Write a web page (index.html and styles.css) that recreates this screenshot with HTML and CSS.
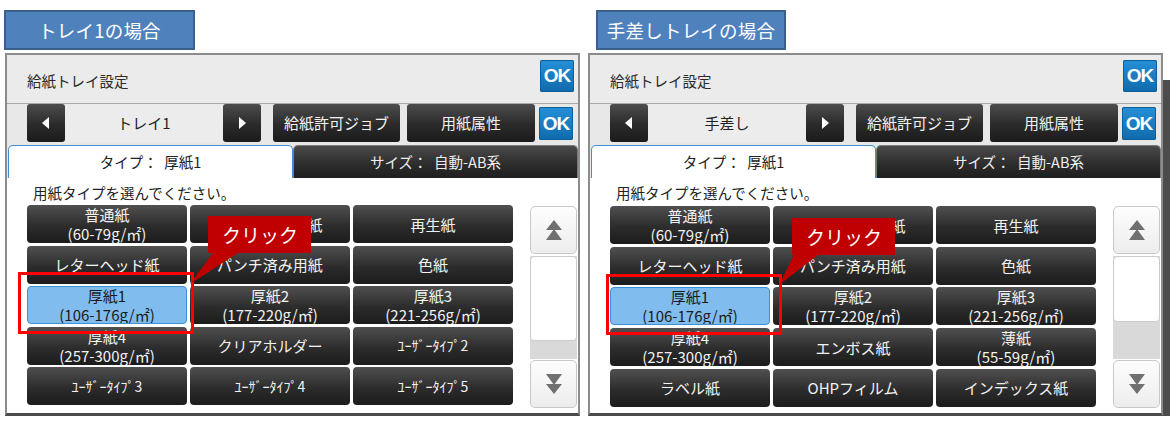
FILE: index.html
```html
<!DOCTYPE html>
<html lang="ja">
<head>
<meta charset="utf-8">
<title>給紙トレイ設定</title>
<link rel="stylesheet" href="styles.css">
</head>
<body>
<div class="page">

  <!-- トレイ1 -->
  <section class="col col-a">
    <div class="label">トレイ1の場合</div>
    <div class="frame">
      <div class="panel">
        <div class="head">
          <span class="title">給紙トレイ設定</span>
          <button class="ok">OK</button>
        </div>
        <div class="nav">
          <button class="arrow"><svg width="8" height="12" viewBox="0 0 8 12"><polygon points="7,0 7,12 0,6" fill="#fff"/></svg></button>
          <div class="tray">トレイ1</div>
          <button class="arrow"><svg width="8" height="12" viewBox="0 0 8 12"><polygon points="1,0 1,12 8,6" fill="#fff"/></svg></button>
          <button class="navbtn job">給紙許可ジョブ</button>
          <button class="navbtn attr">用紙属性</button>
          <button class="ok ok-nav">OK</button>
        </div>
        <div class="tabs">
          <div class="tab active">タイプ：&nbsp;&nbsp;厚紙1</div>
          <div class="tab">サイズ：&nbsp;&nbsp;自動-AB系</div>
        </div>
        <div class="body">
          <div class="hint">用紙タイプを選んでください。</div>
          <div class="content">
            <div class="grid">
              <div class="cell"><span>普通紙</span><span>(60-79g/㎡)</span></div>
              <div class="cell"><span>プレプリント紙</span></div>
              <div class="cell"><span>再生紙</span></div>
              <div class="cell"><span>レターヘッド紙</span></div>
              <div class="cell"><span>パンチ済み用紙</span></div>
              <div class="cell"><span>色紙</span></div>
              <div class="cell selected"><span>厚紙1</span><span>(106-176g/㎡)</span></div>
              <div class="cell"><span>厚紙2</span><span>(177-220g/㎡)</span></div>
              <div class="cell"><span>厚紙3</span><span>(221-256g/㎡)</span></div>
              <div class="cell"><span>厚紙4</span><span>(257-300g/㎡)</span></div>
              <div class="cell"><span>クリアホルダー</span></div>
              <div class="cell hw"><span>ﾕｰｻﾞｰﾀｲﾌﾟ2</span></div>
              <div class="cell hw"><span>ﾕｰｻﾞｰﾀｲﾌﾟ3</span></div>
              <div class="cell hw"><span>ﾕｰｻﾞｰﾀｲﾌﾟ4</span></div>
              <div class="cell hw"><span>ﾕｰｻﾞｰﾀｲﾌﾟ5</span></div>
            </div>
            <div class="scroll">
              <button class="sbtn"><svg width="16" height="20" viewBox="0 0 16 20"><polygon points="8,0 16,10 0,10" fill="#707070"/><polygon points="8,9 16,20 0,20" fill="#707070"/></svg></button>
              <div class="track track-a"><div class="thumb"></div></div>
              <button class="sbtn"><svg width="16" height="20" viewBox="0 0 16 20"><polygon points="0,0 16,0 8,11" fill="#707070"/><polygon points="0,10 16,10 8,20" fill="#707070"/></svg></button>
            </div>
          </div>
        </div>

        <div class="mark mark-a"></div>
        <svg class="pointer" width="575" height="363" viewBox="0 0 575 363"><polygon points="208,200 233,200 185,231" fill="#c00000"/></svg>
        <div class="callout callout-a">クリック</div>
      </div>
    </div>
  </section>

  <!-- 手差しトレイ -->
  <section class="col col-b">
    <div class="label label-b">手差しトレイの場合</div>
    <div class="frame">
      <div class="panel">
        <div class="head">
          <span class="title">給紙トレイ設定</span>
          <button class="ok">OK</button>
        </div>
        <div class="nav">
          <button class="arrow"><svg width="8" height="12" viewBox="0 0 8 12"><polygon points="7,0 7,12 0,6" fill="#fff"/></svg></button>
          <div class="tray">手差し</div>
          <button class="arrow"><svg width="8" height="12" viewBox="0 0 8 12"><polygon points="1,0 1,12 8,6" fill="#fff"/></svg></button>
          <button class="navbtn job">給紙許可ジョブ</button>
          <button class="navbtn attr">用紙属性</button>
          <button class="ok ok-nav">OK</button>
        </div>
        <div class="tabs">
          <div class="tab active">タイプ：&nbsp;&nbsp;厚紙1</div>
          <div class="tab">サイズ：&nbsp;&nbsp;自動-AB系</div>
        </div>
        <div class="body body-b">
          <div class="hint">用紙タイプを選んでください。</div>
          <div class="content">
            <div class="grid">
              <div class="cell"><span>普通紙</span><span>(60-79g/㎡)</span></div>
              <div class="cell"><span>プレプリント紙</span></div>
              <div class="cell"><span>再生紙</span></div>
              <div class="cell"><span>レターヘッド紙</span></div>
              <div class="cell"><span>パンチ済み用紙</span></div>
              <div class="cell"><span>色紙</span></div>
              <div class="cell selected"><span>厚紙1</span><span>(106-176g/㎡)</span></div>
              <div class="cell"><span>厚紙2</span><span>(177-220g/㎡)</span></div>
              <div class="cell"><span>厚紙3</span><span>(221-256g/㎡)</span></div>
              <div class="cell"><span>厚紙4</span><span>(257-300g/㎡)</span></div>
              <div class="cell"><span>エンボス紙</span></div>
              <div class="cell"><span>薄紙</span><span>(55-59g/㎡)</span></div>
              <div class="cell"><span>ラベル紙</span></div>
              <div class="cell"><span>OHPフィルム</span></div>
              <div class="cell"><span>インデックス紙</span></div>
            </div>
            <div class="scroll">
              <button class="sbtn"><svg width="16" height="20" viewBox="0 0 16 20"><polygon points="8,0 16,10 0,10" fill="#707070"/><polygon points="8,9 16,20 0,20" fill="#707070"/></svg></button>
              <div class="track track-b"><div class="thumb"></div></div>
              <button class="sbtn"><svg width="16" height="20" viewBox="0 0 16 20"><polygon points="0,0 16,0 8,11" fill="#707070"/><polygon points="0,10 16,10 8,20" fill="#707070"/></svg></button>
            </div>
          </div>
        </div>

        <div class="mark mark-b"></div>
        <svg class="pointer" width="575" height="363" viewBox="0 0 575 363"><polygon points="206,202 230,202 191,232" fill="#c00000"/></svg>
        <div class="callout callout-b">クリック</div>
      </div>
      <div class="edge"></div>
    </div>
  </section>

</div>
</body>
</html>
```

FILE: styles.css
```css
* {
  box-sizing: border-box;
}

html, body {
  margin: 0;
  padding: 0;
  background: #fff;
}

body {
  width: 1170px;
  height: 425px;
  overflow: hidden;
  font-family: "Noto Sans CJK JP", "Noto Sans", sans-serif;
  color: #222;
}

button {
  font-family: inherit;
  border: 0;
  padding: 0;
  margin: 0;
  cursor: pointer;
}

.page {
  display: flex;
  padding-top: 10px;
}

.col {
  display: flex;
  flex-direction: column;
}

.col-a {
  margin-left: 4px;
}

.col-b {
  margin-left: 8px;
}

/* blue caption boxes */
.label {
  width: 191px;
  height: 40px;
  background: #4f81bd;
  border: 2px solid #3b5f8d;
  color: #fff;
  font-size: 18.5px;
  line-height: 36px;
  text-align: center;
  letter-spacing: 0.2px;
}

.label-b {
  width: 190px;
  margin-left: 8px;
}

.frame {
  display: flex;
  margin-top: 3px;
}

.col-a .frame {
  margin-left: 1px;
}

/* device screen */
.panel {
  position: relative;
  width: 575px;
  height: 363px;
  border: 2px solid #8c8c8c;
  border-bottom: 3px solid #4b4b4b;
  background: #ebebeb;
  display: flex;
  flex-direction: column;
}

.edge {
  width: 7px;
  margin-top: 27px;
  height: 336px;
  background: #4c4c4c;
}

.head {
  height: 49px;
  flex: none;
  display: flex;
  justify-content: space-between;
  align-items: flex-start;
  padding: 5px 4px 0 20px;
  background: #ebebeb;
  border-bottom: 1px solid #a9a9a9;
}

.title {
  font-size: 14.5px;
  line-height: 20px;
  margin-top: 11px;
  color: #2a2a2a;
}

.ok {
  width: 34px;
  height: 32px;
  border-radius: 2px;
  background: linear-gradient(#2590d8, #106aab);
  color: #fff;
  font-family: "Liberation Sans", Arial, sans-serif;
  font-weight: bold;
  font-size: 19px;
  letter-spacing: -1px;
  line-height: 32px;
  text-align: center;
  box-shadow: inset 0 0 0 1px #0d5f9c;
}

.nav {
  height: 41px;
  flex: none;
  display: flex;
  align-items: flex-start;
  padding: 0 4px 0 20px;
  background: #e8e8e8;
}

.arrow {
  width: 38px;
  height: 38px;
  border-radius: 3px;
  background: linear-gradient(#4d4d4d, #2a2a2a 55%, #1b1b1b);
  display: flex;
  align-items: center;
  justify-content: center;
}

.tray {
  width: 158px;
  height: 38px;
  background: #ececec;
  font-size: 15px;
  line-height: 38px;
  text-align: center;
  color: #222;
}

.navbtn {
  height: 38px;
  border-radius: 3px;
  background: linear-gradient(#4d4d4d, #2a2a2a 55%, #1b1b1b);
  color: #f2f2f2;
  font-size: 15px;
  line-height: 38px;
  text-align: center;
}

.job {
  width: 127px;
  margin-left: 12px;
}

.attr {
  width: 128px;
  margin-left: 7px;
}

.ok-nav {
  margin-left: 4px;
  margin-top: 3px;
  height: 33px;
  line-height: 33px;
}

.tabs {
  height: 33px;
  flex: none;
  display: flex;
  background: #e8e8e8;
}

.tab {
  flex: 1;
  height: 33px;
  font-size: 14.5px;
  line-height: 31px;
  text-align: center;
  border-radius: 5px 5px 0 0;
  background: linear-gradient(#4a4a4a, #2b2b2b 60%, #1f1f1f);
  color: #eee;
  border: 1px solid #7a7a7a;
  border-bottom: 0;
}

.tab.active {
  flex: none;
  width: 285px;
  margin-left: 1px;
  background: #fff;
  color: #222;
  border: 1px solid #3f8ed8;
  border-bottom: 0;
}

.body {
  flex: 1;
  background: #fff;
  padding: 5px 1px 0 20px;
}

.hint {
  height: 20px;
  font-size: 14.5px;
  line-height: 20px;
  padding-left: 6px;
  margin-bottom: 2px;
  color: #222;
}

.content {
  display: flex;
  gap: 17px;
}

.grid {
  display: grid;
  grid-template-columns: repeat(3, 160px);
  grid-auto-rows: 38px;
  gap: 2.5px 3px;
}

.body-b .grid {
  margin-top: 1px;
  row-gap: 2.7px;
}

.cell {
  border-radius: 4px;
  background: linear-gradient(#505050, #2c2c2c 55%, #1c1c1c);
  color: #f2f2f2;
  font-size: 15px;
  line-height: 19px;
  display: flex;
  flex-direction: column;
  align-items: center;
  justify-content: center;
  overflow: hidden;
  white-space: nowrap;
}

.cell.hw {
  font-size: 14px;
}

.cell.selected {
  background: #80bdee;
  border: 1px solid #3d8fd8;
  color: #1b1b1b;
}

/* scroll bar */
.scroll {
  width: 47px;
  margin-top: 1px;
  display: flex;
  flex-direction: column;
}

.sbtn {
  width: 47px;
  height: 48px;
  border: 1px solid #c8c8c8;
  border-radius: 5px;
  background: linear-gradient(#fdfdfd, #ededed);
  display: flex;
  align-items: center;
  justify-content: center;
}

.track {
  height: 103px;
  margin: 2px 0 1px;
  background: #d9d9d9;
}

.thumb {
  background: #fff;
  border: 1px solid #cbcbcb;
  border-radius: 4px;
}

.track-a .thumb {
  height: 85px;
}

.track-b .thumb {
  height: 66px;
}

/* annotation overlays */
.mark {
  position: absolute;
  width: 176px;
  border: 3px solid #ff0000;
}

.mark-a {
  left: 11px;
  top: 217px;
  height: 62px;
}

.mark-b {
  left: 16px;
  top: 219px;
  height: 61px;
}

.pointer {
  position: absolute;
  left: -2px;
  top: -2px;
  pointer-events: none;
}

.callout {
  position: absolute;
  width: 103px;
  height: 37px;
  background: #c00000;
  color: #fff;
  font-size: 19px;
  line-height: 37px;
  padding-left: 14px;
}

.callout-a {
  left: 201px;
  top: 161px;
}

.callout-b {
  left: 202px;
  top: 163px;
}
```
